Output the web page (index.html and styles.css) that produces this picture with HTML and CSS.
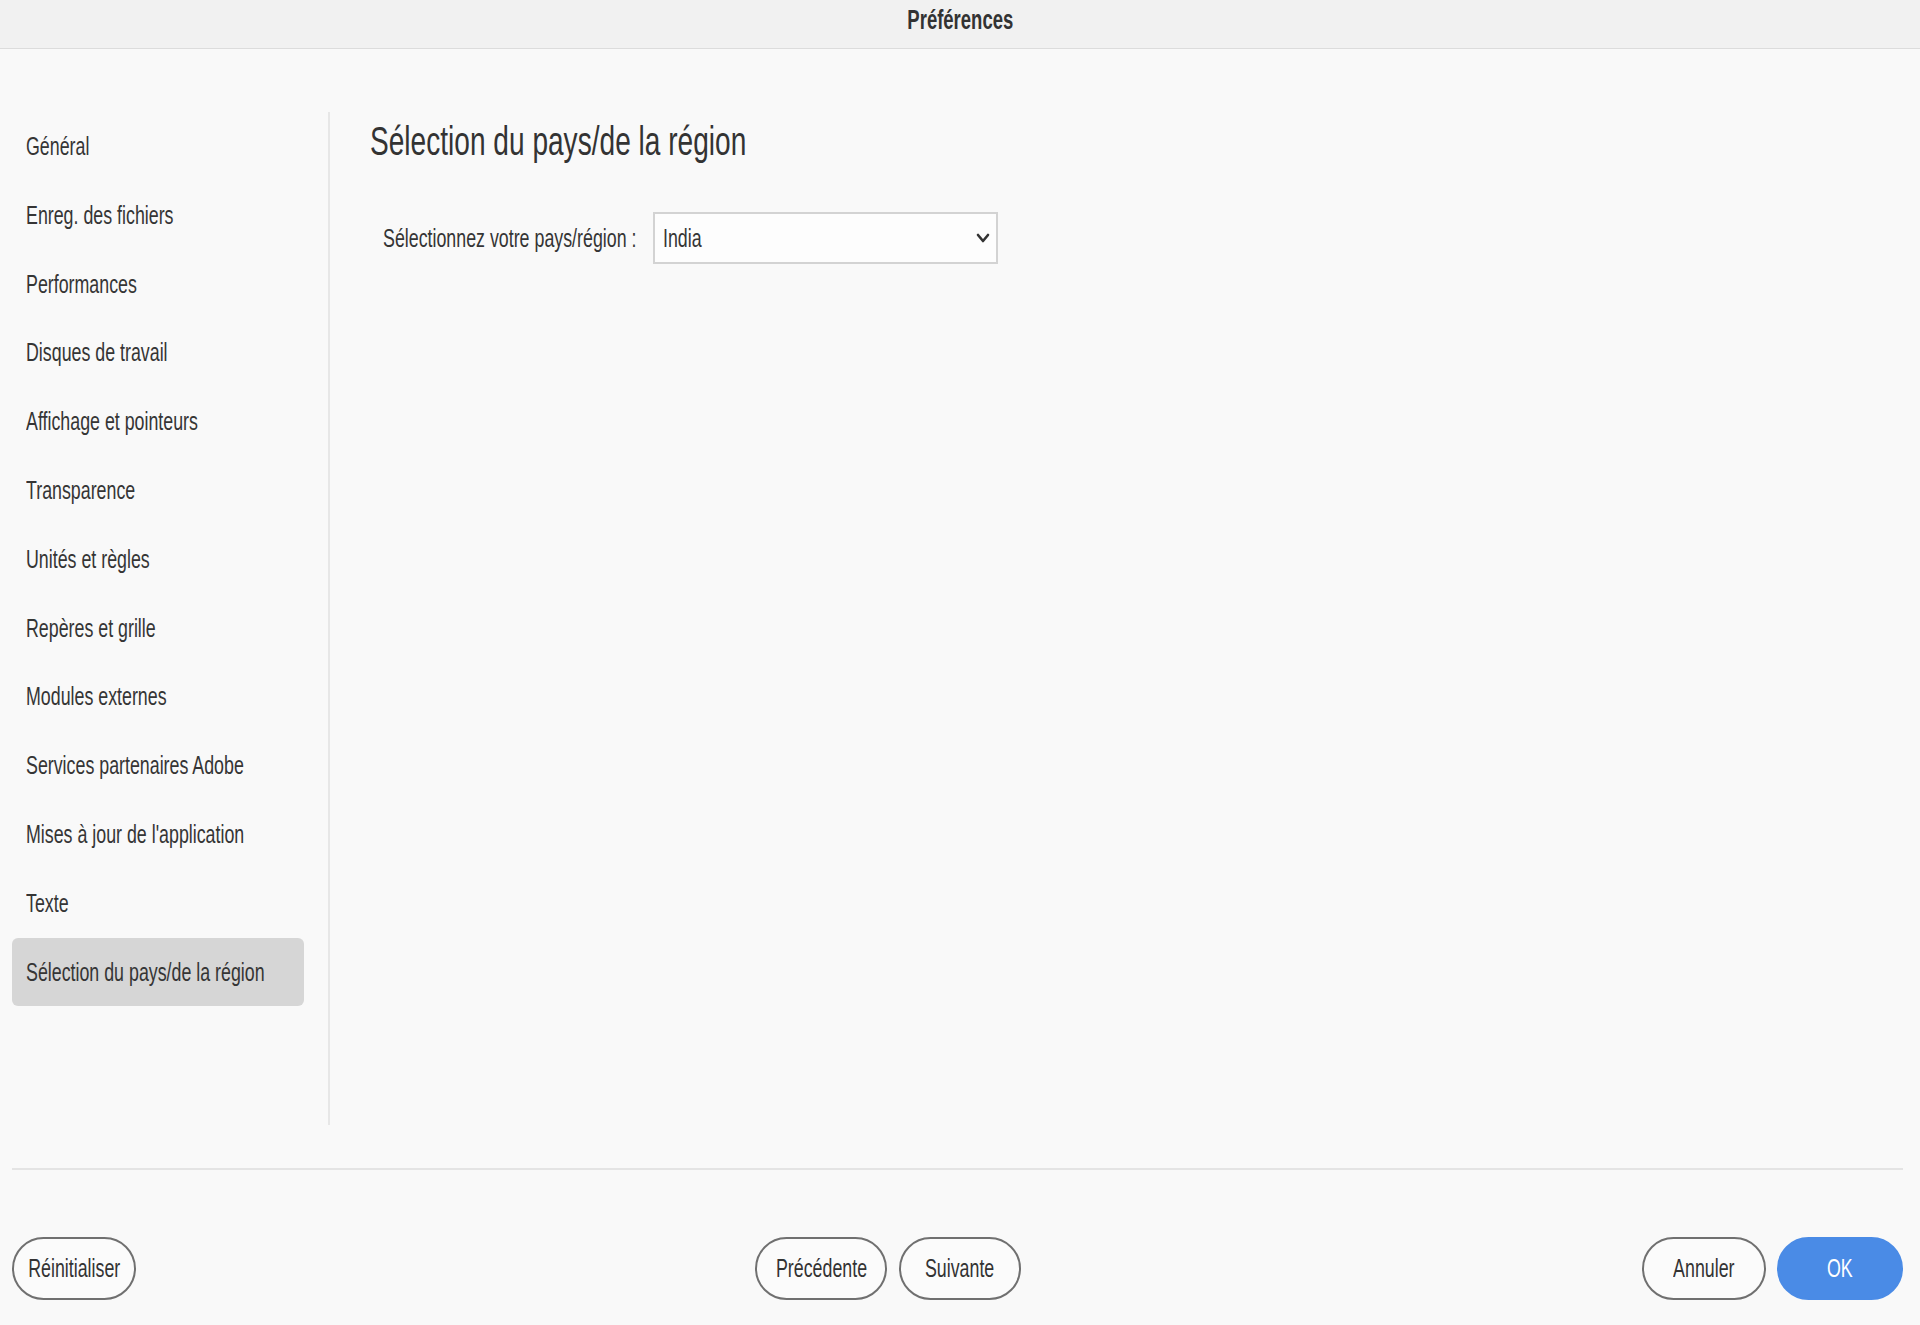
FILE: index.html
```html
<!DOCTYPE html>
<html>
<head>
    <link rel="stylesheet" href="styles.css">
</head>
<body>
    <div class="titlebar"><span class="sx">Préférences</span></div>

    <div class="main">
        <ul class="nav">
            <li><span class="sx">Général</span></li>
            <li><span class="sx">Enreg. des fichiers</span></li>
            <li><span class="sx">Performances</span></li>
            <li><span class="sx">Disques de travail</span></li>
            <li><span class="sx">Affichage et pointeurs</span></li>
            <li><span class="sx">Transparence</span></li>
            <li><span class="sx">Unités et règles</span></li>
            <li><span class="sx">Repères et grille</span></li>
            <li><span class="sx">Modules externes</span></li>
            <li><span class="sx">Services partenaires Adobe</span></li>
            <li><span class="sx">Mises à jour de l'application</span></li>
            <li><span class="sx">Texte</span></li>
            <li class="selected"><span class="sx">Sélection du pays/de la région</span></li>
        </ul>

        <div class="panel">
            <h1><span class="sx">Sélection du pays/de la région</span></h1>
            <div class="field">
                <div class="field-label"><span class="sx">Sélectionnez votre pays/région :</span></div>
                <div class="select">
                    <span class="sx">India</span>
                    <svg class="chevron" width="14" height="10" viewBox="0 0 14 10">
                        <polyline points="2,2 7,8 12,2" fill="none" stroke="#333" stroke-width="2.6" stroke-linecap="round" stroke-linejoin="round"/>
                    </svg>
                </div>
            </div>
        </div>
    </div>

    <div class="footer">
        <button class="btn btn-reset"><span class="sx">Réinitialiser</span></button>
        <div class="btn-group">
            <button class="btn btn-prev"><span class="sx">Précédente</span></button>
            <button class="btn btn-next"><span class="sx">Suivante</span></button>
        </div>
        <div class="btn-group btn-group-right">
            <button class="btn btn-cancel"><span class="sx">Annuler</span></button>
            <button class="btn btn-ok"><span class="sx">OK</span></button>
        </div>
    </div>
</body>
</html>
```

FILE: styles.css
```css
body {
    margin: 0;
    background-color: #f9f9f9;
    font-family: "Liberation Sans", Arial, sans-serif;
    font-size: 26px;
    color: #353535;
}

/* the UI font is a narrow one, so the text is squeezed */
.sx {
    display: inline-block;
    white-space: nowrap;
    transform: scaleX(0.685);
    transform-origin: left center;
}

.titlebar {
    height: 49px;
    background-color: #f1f1f1;
    border-bottom: 1px solid #dcdcdc;
    display: flex;
    justify-content: center;
    align-items: flex-start;
    box-sizing: border-box;
}

.titlebar .sx {
    font-size: 27px;
    font-weight: bold;
    line-height: 27px;
    margin-top: 7px;
    color: #333;
    transform-origin: center center;
}

.main {
    display: flex;
    padding: 63px 0 43px 12px;
}

.nav {
    list-style: none;
    margin: 0;
    padding: 0 24px 0 0;
    width: 292px;
    height: 1013px;
    border-right: 2px solid #e7e7e7;
    flex-shrink: 0;
}

.nav li {
    height: 68.8px;
    line-height: 68.8px;
    padding-left: 14px;
    border-radius: 6px;
}

.nav li.selected {
    background-color: #d6d6d6;
}

.panel {
    flex-grow: 1;
    padding-left: 40px;
}

.panel h1 {
    margin: 9px 0 0 0;
    font-size: 41px;
    font-weight: normal;
    line-height: 41px;
    color: #333;
}

.field {
    display: flex;
    align-items: center;
    margin-top: 50px;
    padding-left: 13px;
}

.field-label {
    width: 270px;
    flex-shrink: 0;
}

.select {
    width: 345px;
    height: 52px;
    box-sizing: border-box;
    border: 2px solid #d3d3d3;
    background-color: #fdfdfd;
    display: flex;
    align-items: center;
    justify-content: space-between;
    padding: 0 6px 0 8px;
}

.chevron {
    display: block;
}

.footer {
    display: flex;
    align-items: center;
    margin: 0 17px 0 12px;
    border-top: 2px solid #e4e4e4;
    padding-top: 67px;
}

.btn-group {
    display: flex;
    gap: 12px;
    margin-left: 619px;
}

.btn-group-right {
    margin-left: auto;
    gap: 11px;
}

.btn {
    height: 63px;
    width: 124px;
    border: 2px solid #707070;
    border-radius: 32px;
    background-color: #fbfbfb;
    font-family: inherit;
    font-size: 26px;
    color: #333;
    padding: 0;
    display: flex;
    justify-content: center;
    align-items: center;
    overflow: visible;
}

.btn .sx {
    transform-origin: center center;
}

.btn-prev { width: 132px; }
.btn-next { width: 122px; }
.btn-ok {
    width: 126px;
    border-color: #4a8be6;
    background-color: #4a8be6;
    color: #fff;
}
```
